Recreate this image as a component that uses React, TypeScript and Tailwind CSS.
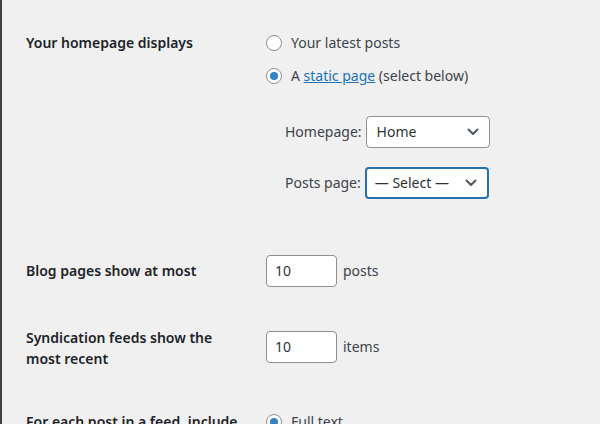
import React from "react";

function Radio({ checked }: { checked?: boolean }) {
  return (
    <span className="relative flex h-4 w-4 shrink-0 items-center justify-center rounded-full border border-[#8c8f94] bg-white">
      {checked && <span className="h-2 w-2 rounded-full bg-[#3582c4]" />}
    </span>
  );
}

function Chevron() {
  return (
    <svg width="12" height="8" viewBox="0 0 12 8" fill="none" className="shrink-0">
      <path d="M1.5 1.5 L6 6 L10.5 1.5" stroke="#50575e" strokeWidth="2" strokeLinecap="round" strokeLinejoin="round" />
    </svg>
  );
}

function Select({ value, focused, width }: { value: string; focused?: boolean; width: string }) {
  return (
    <div
      className={`flex h-8 items-center justify-between rounded-[4px] bg-white pr-[10px] ${width} ${
        focused ? "border-2 border-[#2271b1] pl-[8px]" : "border border-[#8c8f94] pl-[10px]"
      }`}
    >
      <span className="text-[#2c3338]">{value}</span>
      <Chevron />
    </div>
  );
}

function NumInput({ value }: { value: string }) {
  return (
    <div className="flex h-8 w-[71px] items-center rounded-[4px] border border-[#8c8f94] bg-white pl-[8px] text-[#2c3338]">
      {value}
    </div>
  );
}

export default function App() {
  return (
    <div
      className="h-[424px] w-[600px] overflow-hidden border-l-2 border-[#3c434a] bg-[#f0f0f1] text-[14px] leading-5 text-[#3c434a]"
      style={{ fontFamily: '"Noto Sans", "Open Sans", sans-serif' }}
    >
      <div className="pl-6">
        {/* Row 1 */}
        <div className="flex pt-[33px]">
          <div className="w-[240px] shrink-0 font-semibold text-[#1d2327]">Your homepage displays</div>
          <div className="flex flex-col">
            <div className="flex flex-col gap-[13px]">
              <label className="flex items-center gap-[9px]">
                <Radio />
                <span>Your latest posts</span>
              </label>
              <label className="flex items-center gap-[9px]">
                <Radio checked />
                <span>
                  A <span className="text-[#2271b1] underline">static page</span> (select below)
                </span>
              </label>
            </div>
            <div className="mt-[30px] flex flex-col gap-[19px] pl-[19px]">
              <div className="flex items-center gap-[4px]">
                <span>Homepage:</span>
                <Select value="Home" width="w-[124px]" />
              </div>
              <div className="flex items-center gap-[4px]">
                <span>Posts page:</span>
                <Select value="— Select —" focused width="w-[124px]" />
              </div>
            </div>
          </div>
        </div>

        {/* Row 2 */}
        <div className="mt-[56px] flex items-center">
          <div className="w-[240px] shrink-0 font-semibold text-[#1d2327]">Blog pages show at most</div>
          <div className="flex items-center gap-[6px]">
            <NumInput value="10" />
            <span>posts</span>
          </div>
        </div>

        {/* Row 3 */}
        <div className="mt-[40px] flex items-start">
          <div className="w-[240px] shrink-0 font-semibold leading-[21px] text-[#1d2327]">
            Syndication feeds show the
            <br />
            most recent
          </div>
          <div className="mt-[4px] flex items-center gap-[6px]">
            <NumInput value="10" />
            <span>items</span>
          </div>
        </div>

        {/* Row 4 */}
        <div className="mt-[43px] flex items-start">
          <div className="w-[240px] shrink-0 font-semibold text-[#1d2327]">For each post in a feed, include</div>
          <label className="flex items-center gap-[9px]">
            <Radio checked />
            <span>Full text</span>
          </label>
        </div>
      </div>
    </div>
  );
}
